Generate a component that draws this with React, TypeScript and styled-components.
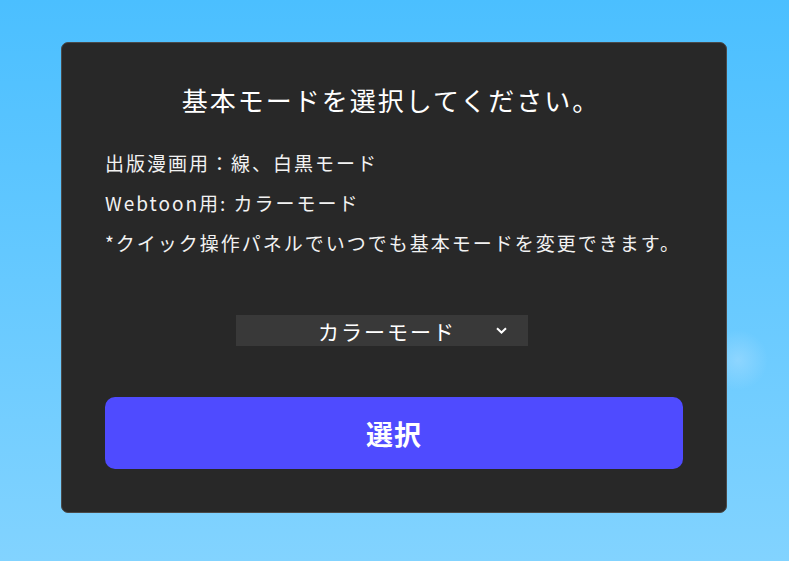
import React, { useState } from 'react';
import styled, { createGlobalStyle } from 'styled-components';

const GlobalStyle = createGlobalStyle`
  html, body {
    margin: 0;
    padding: 0;
  }
  body {
    font-family: 'Noto Sans CJK JP', 'Noto Sans', sans-serif;
    color: #fff;
  }
`;

const Page = styled.div`
  box-sizing: border-box;
  width: 789px;
  height: 561px;
  padding: 42px 62px 48px 61px;
  background: radial-gradient(circle at 738px 360px, rgba(180, 225, 255, 0.45) 0, rgba(180, 225, 255, 0) 30px),
    linear-gradient(180deg, #4bbfff 0%, #66c9ff 50%, #82d3ff 100%);
  display: flex;
`;

const Dialog = styled.div`
  box-sizing: border-box;
  flex: 1;
  background: #282828;
  border: 1px solid #4a4a4a;
  border-radius: 7px;
  padding: 38px 43px 43px;
  display: flex;
  flex-direction: column;
`;

const Title = styled.h1`
  margin: 0 0 24px;
  text-align: center;
  font-size: 26px;
  font-weight: 400;
  line-height: 38px;
  letter-spacing: 2px;
  padding-right: 6px;
`;

const Note = styled.p`
  margin: 0;
  font-size: 19px;
  line-height: 40px;
  letter-spacing: 2px;
  color: #f2f2f2;
`;

const SelectRow = styled.div`
  display: flex;
  justify-content: center;
  padding-right: 24px;
  margin: 52px 0 51px;
`;

const SelectBox = styled.button`
  position: relative;
  width: 292px;
  height: 31px;
  border: none;
  background: #393939;
  color: #fff;
  font-family: inherit;
  font-size: 21px;
  letter-spacing: 2px;
  padding: 0 0 0 10px;
  display: flex;
  align-items: center;
  justify-content: center;
  cursor: pointer;
`;

const Chevron = styled.svg`
  position: absolute;
  right: 21px;
  top: 12px;
`;

const SubmitButton = styled.button`
  height: 72px;
  border: none;
  border-radius: 10px;
  background: #4f4bff;
  color: #fff;
  font-family: inherit;
  font-size: 27px;
  font-weight: 700;
  letter-spacing: 1px;
  cursor: pointer;
`;

export default function App() {
  const [mode] = useState('カラーモード');

  return (
    <>
      <GlobalStyle />
      <Page>
        <Dialog>
          <Title>基本モードを選択してください。</Title>
          <Note>出版漫画用：線、白黒モード</Note>
          <Note>Webtoon用: カラーモード</Note>
          <Note>*クイック操作パネルでいつでも基本モードを変更できます。</Note>
          <SelectRow>
            <SelectBox>
              {mode}
              <Chevron width="11" height="7" viewBox="0 0 11 7">
                <path d="M1 1.2l4.5 4.3 4.5-4.3" fill="none" stroke="#fff" strokeWidth="2" />
              </Chevron>
            </SelectBox>
          </SelectRow>
          <SubmitButton>選択</SubmitButton>
        </Dialog>
      </Page>
    </>
  );
}
